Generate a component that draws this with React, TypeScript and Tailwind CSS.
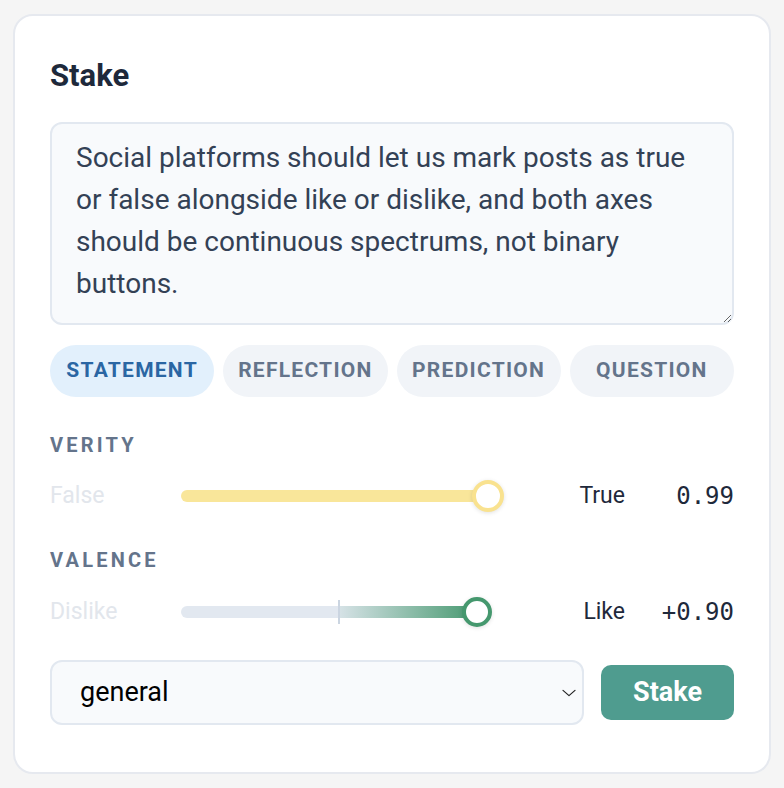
import React from "react";

const sans = { fontFamily: 'Roboto, Inter, "Noto Sans", sans-serif' };
const mono = { fontFamily: '"DejaVu Sans Mono", "Liberation Mono", monospace' };

function Chip({ label, active }: { label: string; active?: boolean }) {
  return (
    <div
      className={
        "h-[52px] rounded-full flex items-center justify-center text-[21px] font-bold tracking-[0.06em] " +
        (active ? "bg-[#e2f0fc] text-[#2a66a3]" : "bg-[#f1f4f8] text-[#64748b]")
      }
    >
      {label}
    </div>
  );
}

export default function App() {
  return (
    <div className="min-h-screen bg-[#f5f5f5] pl-[13px] pt-[14px]" style={sans}>
      <div className="w-[758px] h-[760px] rounded-[20px] border-2 border-[#e6e9ef] bg-white px-[35px] pt-[44px] pb-[47px]">
        <div className="text-[31px] font-bold leading-8 text-[#1e293b]">Stake</div>

        <textarea
          className="mt-[30px] block h-[203px] w-full rounded-[12px] border-2 border-[#e2e8f0] bg-[#f8fafc] px-[24px] pt-[13px] text-[28px] leading-[42px] text-[#334155] outline-none"
          style={sans}
          defaultValue="Social platforms should let us mark posts as true or false alongside like or dislike, and both axes should be continuous spectrums, not binary buttons."
        />

        <div className="mt-[20px] grid grid-cols-4 gap-[9px]">
          <Chip label="STATEMENT" active />
          <Chip label="REFLECTION" />
          <Chip label="PREDICTION" />
          <Chip label="QUESTION" />
        </div>

        <div className="mt-[36px] h-6 text-[20px] font-bold leading-6 tracking-[0.16em] text-[#64748b]">VERITY</div>
        <div className="mt-[21px] grid h-8 grid-cols-[131px_310px_134px_109px] items-center">
          <div className="text-[23px] text-[#e2e6ec]">False</div>
          <div className="relative h-[12px] w-[310px]">
            <div className="absolute left-0 top-0 h-[12px] w-[307px] rounded-full bg-[#f9e69a]" />
            <div className="absolute left-[291px] top-[-10px] h-[32px] w-[32px] rounded-full border-[4px] border-[#f9e28f] bg-white shadow-[0_1px_4px_rgba(0,0,0,0.12)]" />
          </div>
          <div className="text-right text-[23px] text-[#1e293b]">True</div>
          <div className="text-right text-[24px] text-[#1e293b]" style={mono}>0.99</div>
        </div>

        <div className="mt-[38px] h-6 text-[20px] font-bold leading-6 tracking-[0.16em] text-[#64748b]">VALENCE</div>
        <div className="mt-[22px] grid h-8 grid-cols-[131px_310px_134px_109px] items-center">
          <div className="text-[23px] text-[#e2e6ec]">Dislike</div>
          <div className="relative h-[12px] w-[310px]">
            <div className="absolute left-0 top-0 h-[12px] w-[300px] rounded-full bg-[#e2e8f0]" />
            <div className="absolute left-[158px] top-0 h-[12px] w-[140px] bg-gradient-to-r from-[rgba(74,157,116,0.08)] to-[#45986e]" />
            <div className="absolute left-[157px] top-[-6px] h-[24px] w-[2px] bg-[#cbd5e1]" />
            <div className="absolute left-[281px] top-[-9px] h-[30px] w-[30px] rounded-full border-[4px] border-[#45986e] bg-white shadow-[0_1px_4px_rgba(0,0,0,0.12)]" />
          </div>
          <div className="text-right text-[23px] text-[#1e293b]">Like</div>
          <div className="text-right text-[24px] text-[#1e293b]" style={mono}>+0.90</div>
        </div>

        <div className="mt-[34px] flex items-center gap-[17px]">
          <div className="flex h-[65px] w-[534px] items-center justify-between rounded-[12px] border-2 border-[#e2e8f0] bg-[#f8fafc] pl-[28px] pr-[5px]">
            <span className="text-[27px] text-black">general</span>
            <svg width="16" height="16" viewBox="0 0 24 24" fill="none" stroke="#222" strokeWidth="1.8" strokeLinecap="round" strokeLinejoin="round">
              <path d="M3 8l9 8 9-8" />
            </svg>
          </div>
          <button className="h-[55px] w-[133px] rounded-[10px] bg-[#4f9c8f] text-[27px] font-bold text-white">Stake</button>
        </div>
      </div>
    </div>
  );
}
